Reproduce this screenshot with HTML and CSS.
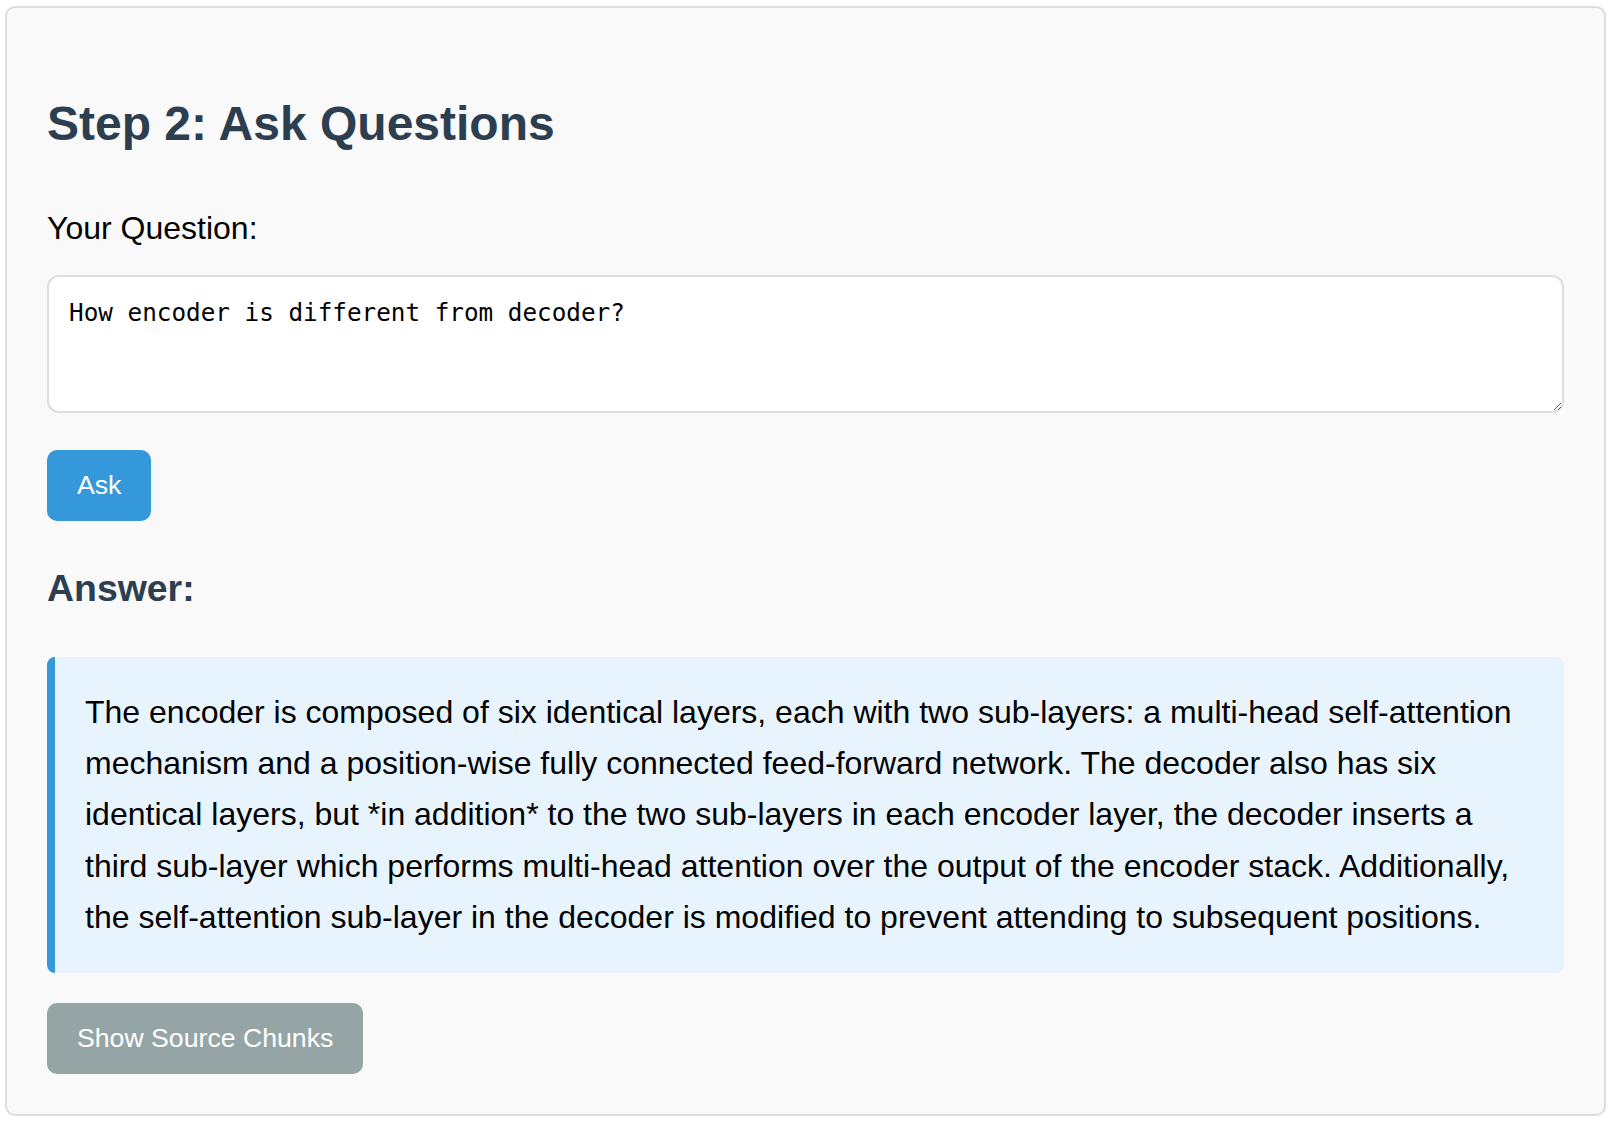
FILE: index.html
```html
<!DOCTYPE html>
<html lang="en">
<head>
<meta charset="utf-8">
<title>Step 2: Ask Questions</title>
<link rel="stylesheet" href="styles.css">
</head>
<body>
<section class="panel">
  <h2 class="panel-title">Step 2: Ask Questions</h2>
  <label class="field-label" for="question">Your Question:</label>
  <textarea id="question" class="question-input">How encoder is different from decoder?</textarea>
  <div class="actions">
    <button class="btn btn-primary" type="button">Ask</button>
  </div>
  <h3 class="answer-title">Answer:</h3>
  <div class="answer-box">The encoder is composed of six identical layers, each with two sub-layers: a multi-head self-attention mechanism and a position-wise fully connected feed-forward network. The decoder also has six identical layers, but *in addition* to the two sub-layers in each encoder layer, the decoder inserts a third sub-layer which performs multi-head attention over the output of the encoder stack. Additionally, the self-attention sub-layer in the decoder is modified to prevent attending to subsequent positions.</div>
  <div class="actions">
    <button class="btn btn-secondary" type="button">Show Source Chunks</button>
  </div>
</section>
</body>
</html>
```

FILE: styles.css
```css
html, body {
  background: #ffffff;
}

body {
  margin: 0;
  padding: 6px 6px 6px 5px;
  font-family: "Liberation Sans", Arial, sans-serif;
  color: #000000;
}

.panel {
  background: #f9f9f9;
  border: 2px solid #dddddd;
  border-radius: 10px;
  padding: 40px;
}

.panel-title {
  margin: 48px 0 59px;
  font-size: 48px;
  font-weight: bold;
  line-height: normal;
  color: #2c3e50;
}

.field-label {
  display: block;
  font-size: 32px;
  line-height: normal;
  margin-bottom: 28px;
}

.question-input {
  display: block;
  box-sizing: border-box;
  width: 100%;
  height: 138px;
  margin: 0 0 37px;
  padding: 21px 20px;
  border: 2px solid #dddddd;
  border-radius: 12px;
  background: #ffffff;
  font-family: "DejaVu Sans Mono", monospace;
  font-size: 24.3px;
  color: #000000;
  resize: vertical;
  outline: none;
}

.actions {
  display: flex;
}

.btn {
  border: none;
  border-radius: 10px;
  padding: 20px 30px;
  font-family: "Liberation Sans", Arial, sans-serif;
  font-size: 26.67px;
  line-height: normal;
  color: #ffffff;
  cursor: pointer;
}

.btn-primary {
  background: #3498db;
}

.btn-secondary {
  background: #95a5a6;
}

.answer-title {
  margin: 46px 0 47px;
  font-size: 37.44px;
  font-weight: bold;
  line-height: normal;
  color: #2c3e50;
}

.answer-box {
  background: #e8f4fd;
  border-left: 8px solid #3498db;
  border-radius: 8px;
  padding: 30px;
  font-size: 32px;
  line-height: 1.6;
  color: #000000;
  margin-bottom: 30px;
}
```
